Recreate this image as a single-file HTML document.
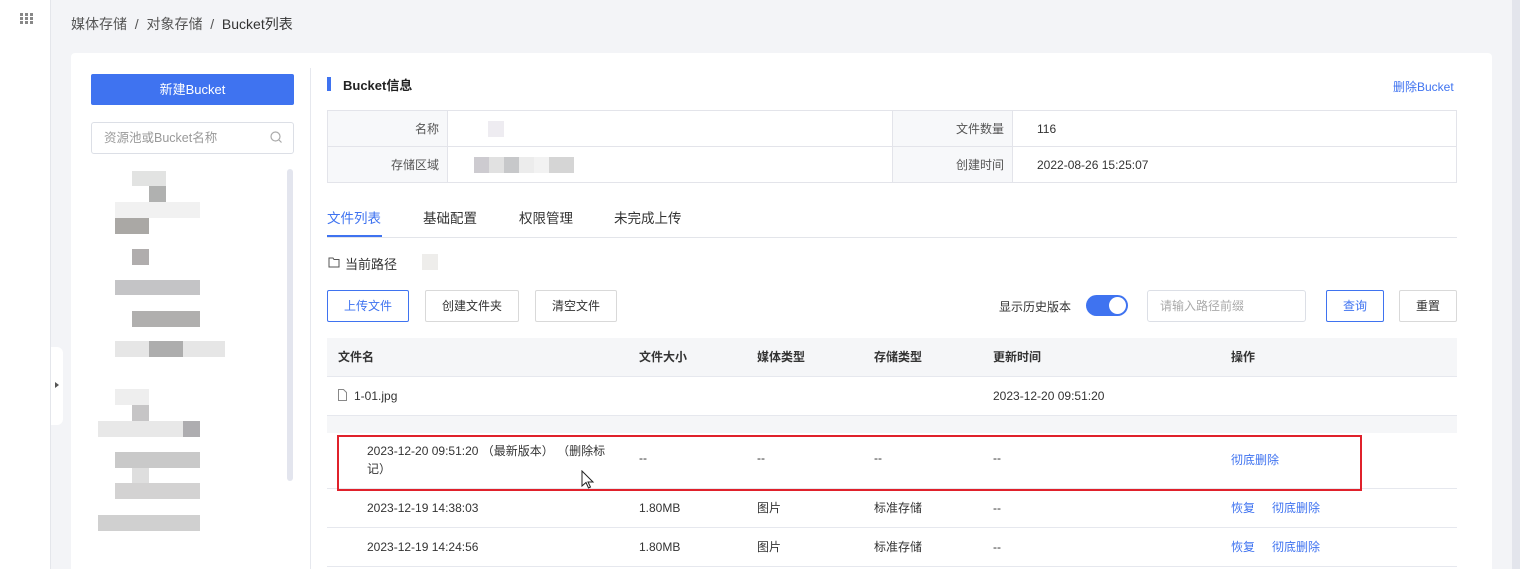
<!DOCTYPE html>
<html style="width:1520px;height:569px;overflow:hidden"><head><meta charset="utf-8"><style>
*{margin:0;padding:0;box-sizing:border-box}
body{width:1520px;height:569px;overflow:hidden;background:#f3f4f7;font-family:"Liberation Sans","Noto Sans CJK SC",sans-serif;font-size:12px;color:#333;position:relative}
.a{position:absolute}
.side{left:0;top:0;width:51px;height:569px;background:#fff;border-right:1px solid #e4e6eb}
.card{left:71px;top:53px;width:1421px;height:516px;background:#fff;border-radius:4px 4px 0 0}
.btn{position:absolute;border:1px solid #d9d9d9;border-radius:2px;text-align:center;line-height:30px;background:#fff;font-size:12px;color:#333}
.blue{color:#3f73f0}
.info td{border:1px solid #e3e4ea;height:36px}
.lab{background:#f7f8fa;text-align:right;padding-right:8px;color:#555}
.row{position:absolute;left:327px;width:1130px;border-bottom:1px solid #e6e8ee}
.c{position:absolute;top:0}
.px{position:absolute}
</style></head><body>
<div class="a side"></div>
<svg class="a" style="left:20px;top:13px" width="13" height="12"><g fill="#888"><rect x="0" y="0" width="3" height="3"/><rect x="5" y="0" width="3" height="3"/><rect x="10" y="0" width="3" height="3"/><rect x="0" y="4" width="3" height="3"/><rect x="5" y="4" width="3" height="3"/><rect x="10" y="4" width="3" height="3"/><rect x="0" y="8" width="3" height="3"/><rect x="5" y="8" width="3" height="3"/><rect x="10" y="8" width="3" height="3"/></g></svg>
<div class="a" style="left:51px;top:347px;width:12px;height:78px;background:#fff;border-radius:0 6px 6px 0"></div>
<div class="a" style="left:55px;top:382px;width:0;height:0;border-left:4px solid #555;border-top:3px solid transparent;border-bottom:3px solid transparent"></div>
<div class="a" style="left:71px;top:14px;font-size:14px;color:#555">媒体存储 &nbsp;/&nbsp; 对象存储 &nbsp;/&nbsp; <span style="color:#333">Bucket列表</span></div>
<div class="a" style="left:1512px;top:0;width:8px;height:569px;background:#e3e5ec"></div>
<div class="a card"></div>
<div class="a" style="left:91px;top:74px;width:203px;height:31px;background:#3f73f0;border-radius:2px;color:#fff;text-align:center;line-height:31px;font-size:13px">新建Bucket</div>
<div class="a" style="left:91px;top:122px;width:203px;height:32px;border:1px solid #dcdfe6;border-radius:3px;color:#999;line-height:30px;padding-left:12px;font-size:12.5px">资源池或Bucket名称</div>
<svg class="a" style="left:270px;top:131px" width="12" height="12"><circle cx="5.5" cy="5.5" r="4.5" fill="none" stroke="#aaa" stroke-width="1.2"/><path d="M9 9l2.5 2.5" stroke="#aaa" stroke-width="1.2"/></svg>
<div class="a" style="left:287px;top:169px;width:6px;height:312px;background:#e3e5ee;border-radius:3px"></div>
<div class="a" style="left:310px;top:68px;width:1px;height:501px;background:#e6e8ee"></div>
<!-- mosaic -->
<div class="px" style="left:132px;top:171px;width:34px;height:15px;background:#e2e3e2"></div>
<div class="px" style="left:149px;top:186px;width:17px;height:16px;background:#b0b1b0"></div>
<div class="px" style="left:115px;top:202px;width:85px;height:16px;background:#f1f1f1"></div>
<div class="px" style="left:115px;top:218px;width:34px;height:16px;background:#aaa8a5"></div>
<div class="px" style="left:132px;top:249px;width:17px;height:16px;background:#b0adad"></div>
<div class="px" style="left:115px;top:280px;width:85px;height:15px;background:#c4c4c6"></div>
<div class="px" style="left:132px;top:311px;width:68px;height:16px;background:#b0afae"></div>
<div class="px" style="left:115px;top:341px;width:110px;height:16px;background:#e6e6e6"></div>
<div class="px" style="left:149px;top:341px;width:34px;height:16px;background:#adadad"></div>
<div class="px" style="left:115px;top:389px;width:34px;height:16px;background:#eeeeee"></div>
<div class="px" style="left:132px;top:405px;width:17px;height:16px;background:#c6c5c6"></div>
<div class="px" style="left:98px;top:421px;width:102px;height:16px;background:#e8e8e8"></div>
<div class="px" style="left:183px;top:421px;width:17px;height:16px;background:#aeadb0"></div>
<div class="px" style="left:115px;top:452px;width:85px;height:16px;background:#c9c9c9"></div>
<div class="px" style="left:132px;top:468px;width:17px;height:15px;background:#dedede"></div>
<div class="px" style="left:115px;top:483px;width:85px;height:16px;background:#d3d2d2"></div>
<div class="px" style="left:98px;top:515px;width:102px;height:16px;background:#d0d0d0"></div>
<!-- right -->
<div class="a" style="left:327px;top:77px;width:4px;height:14px;background:#3f73f0"></div>
<div class="a" style="left:343px;top:75px;font-size:13px;font-weight:bold;color:#222">Bucket信息</div>
<div class="a blue" style="left:1393px;top:78px;font-size:12px">删除Bucket</div>
<table class="a info" style="left:327px;top:110px;width:1130px;border-collapse:collapse">
<tr><td class="lab" style="width:120px">名称</td><td style="width:445px"><div style="margin-left:40px;width:16px;height:16px;background:#eeecf1"></div></td><td class="lab" style="width:120px">文件数量</td><td style="padding-left:24px">116</td></tr>
<tr><td class="lab">存储区域</td><td><div style="margin-left:26px;width:100px;height:16px;background:linear-gradient(90deg,#cdcbd0 0 15%,#e1e1e1 15% 30%,#c7c8ca 30% 45%,#ececec 45% 60%,#f2f2f2 60% 75%,#d5d5d5 75% 100%)"></div></td><td class="lab">创建时间</td><td style="padding-left:24px">2022-08-26 15:25:07</td></tr>
</table>
<div class="a" style="left:327px;top:237px;width:1130px;height:1px;background:#e3e5ea"></div>
<div class="a" style="left:327px;top:235px;width:55px;height:2px;background:#3f73f0"></div>
<div class="a blue" style="left:327px;top:207px;font-size:13.5px">文件列表</div>
<div class="a" style="left:423px;top:207px;font-size:13.5px">基础配置</div>
<div class="a" style="left:519px;top:207px;font-size:13.5px">权限管理</div>
<div class="a" style="left:614px;top:207px;font-size:13.5px">未完成上传</div>
<svg class="a" style="left:328px;top:257px" width="12" height="11"><path d="M1 1h4l1 1.5h5v7.5h-10z" fill="none" stroke="#555"/></svg>
<div class="a" style="left:345px;top:254px;font-size:13px">当前路径</div>
<div class="a" style="left:422px;top:254px;width:16px;height:16px;background:#eeedeb"></div>
<div class="btn blue" style="left:327px;top:290px;width:82px;height:32px;border-color:#3f73f0">上传文件</div>
<div class="btn" style="left:425px;top:290px;width:94px;height:32px">创建文件夹</div>
<div class="btn" style="left:535px;top:290px;width:82px;height:32px">清空文件</div>
<div class="a" style="left:999px;top:298px">显示历史版本</div>
<div class="a" style="left:1086px;top:295px;width:42px;height:21px;background:#3f73f0;border-radius:11px"><div style="position:absolute;right:2px;top:2px;width:17px;height:17px;border-radius:50%;background:#fff"></div></div>
<div class="a" style="left:1147px;top:290px;width:159px;height:32px;border:1px solid #dcdfe6;border-radius:3px;color:#aaa;line-height:30px;padding-left:12px">请输入路径前缀</div>
<div class="btn blue" style="left:1326px;top:290px;width:58px;height:32px;border-color:#3f73f0">查询</div>
<div class="btn" style="left:1399px;top:290px;width:58px;height:32px">重置</div>
<!-- table -->
<div class="row" style="top:338px;height:39px;background:#f5f6f8;font-weight:bold;line-height:38px">
<span class="c" style="left:11px">文件名</span><span class="c" style="left:312px">文件大小</span><span class="c" style="left:430px">媒体类型</span><span class="c" style="left:547px">存储类型</span><span class="c" style="left:666px">更新时间</span><span class="c" style="left:904px">操作</span></div>
<div class="row" style="top:377px;height:39px;line-height:38px">
<svg class="c" style="left:11px;top:12px" width="9" height="12"><path d="M.5.5h5l3 3v8h-8z" fill="none" stroke="#888"/></svg>
<span class="c" style="left:27px">1-01.jpg</span><span class="c" style="left:666px">2023-12-20 09:51:20</span></div>
<div class="row" style="top:416px;height:17px;background:#f5f6f8;border:0"></div>
<div class="row" style="top:433px;height:56px">
<span class="c" style="left:40px;top:9px;line-height:18px;width:245px">2023-12-20 09:51:20 （最新版本） （删除标记）</span>
<span class="c" style="left:312px;top:18px">--</span><span class="c" style="left:430px;top:18px">--</span><span class="c" style="left:547px;top:18px">--</span><span class="c" style="left:666px;top:18px">--</span><span class="c blue" style="left:904px;top:18px">彻底删除</span></div>
<div class="row" style="top:489px;height:39px;line-height:38px">
<span class="c" style="left:40px">2023-12-19 14:38:03</span><span class="c" style="left:312px">1.80MB</span><span class="c" style="left:430px">图片</span><span class="c" style="left:547px">标准存储</span><span class="c" style="left:666px">--</span><span class="c blue" style="left:904px">恢复</span><span class="c blue" style="left:945px">彻底删除</span></div>
<div class="row" style="top:528px;height:39px;line-height:38px">
<span class="c" style="left:40px">2023-12-19 14:24:56</span><span class="c" style="left:312px">1.80MB</span><span class="c" style="left:430px">图片</span><span class="c" style="left:547px">标准存储</span><span class="c" style="left:666px">--</span><span class="c blue" style="left:904px">恢复</span><span class="c blue" style="left:945px">彻底删除</span></div>
<div class="a" style="left:337px;top:435px;width:1025px;height:56px;border:2px solid #e0212b"></div>
<svg class="a" style="left:581px;top:470px" width="14" height="20"><path d="M1 1v15l4-3.5 2.5 5.5 2-1-2.5-5h5z" fill="#fff" stroke="#222" stroke-width="1"/></svg>
</body></html>
